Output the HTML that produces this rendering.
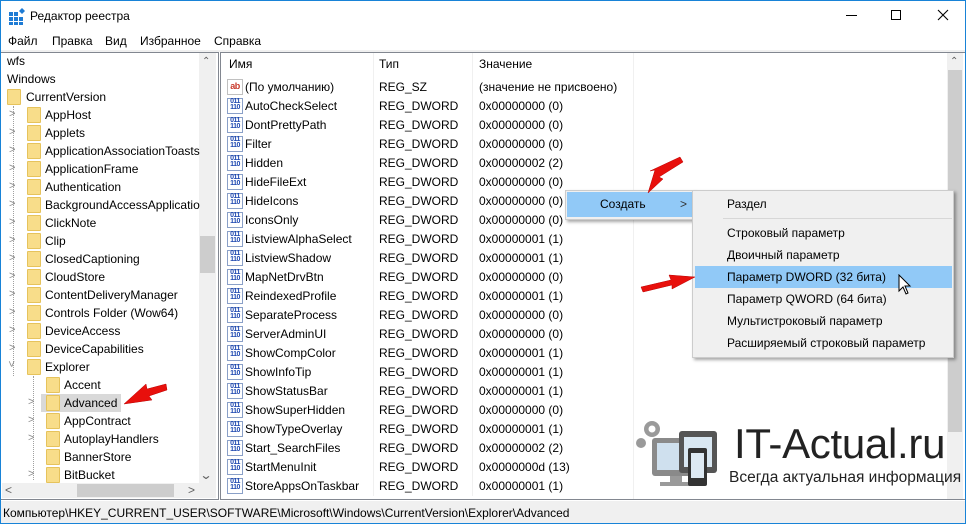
<!DOCTYPE html>
<html><head><meta charset="utf-8"><style>
*{margin:0;padding:0;box-sizing:border-box}
body{width:966px;height:524px;overflow:hidden;background:#fff;font-family:"Liberation Sans","DejaVu Sans",sans-serif;font-size:12px;color:#000;position:relative}
.a{position:absolute;white-space:nowrap}
.fold{position:absolute;width:14px;height:16px;background:#f8dd8a;border:1px solid #e6c35c;border-radius:1px}
.chev{position:absolute;color:#8a8a8a;font-size:11px}
.ic{position:absolute;width:16px;height:16px;border:1px solid #8aa0c8;background:#fff;font-size:7px;line-height:6px;color:#1d47b0;font-weight:bold;text-align:center;letter-spacing:-0.5px}
.rows{position:absolute;left:227px;line-height:19px;width:400px;white-space:nowrap}
.rows>div{position:relative;height:19px}
</style></head><body>
<div class="a" style="left:0;top:0;width:966px;height:524px;border:1px solid #1883d7"></div>
<svg class="a" style="left:9px;top:8px" width="17" height="17"><g fill="#1e7bd4"><rect x="0" y="4" width="4" height="4"/><rect x="5" y="4" width="4" height="4"/><rect x="0" y="9" width="4" height="4"/><rect x="5" y="9" width="4" height="4"/><rect x="10" y="9" width="4" height="4"/><rect x="0" y="14" width="4" height="3"/><rect x="5" y="14" width="4" height="3"/><rect x="10" y="14" width="4" height="3"/></g><path d="M13 0l3 3-3 3-3-3z" fill="#1e7bd4"/></svg>
<div class="a" style="left:30px;top:9px;font-size:12px">Редактор реестра</div>
<div class="a" style="left:846px;top:15px;width:11px;height:1px;background:#000"></div>
<div class="a" style="left:891px;top:10px;width:10px;height:10px;border:1px solid #000"></div>
<svg class="a" style="left:937px;top:9px" width="12" height="12"><path d="M1 1L11 11M11 1L1 11" stroke="#000" stroke-width="1.1"/></svg>
<div class="a" style="left:8px;top:34px">Файл</div>
<div class="a" style="left:52px;top:34px">Правка</div>
<div class="a" style="left:105px;top:34px">Вид</div>
<div class="a" style="left:140px;top:34px">Избранное</div>
<div class="a" style="left:214px;top:34px">Справка</div>
<div class="a" style="left:1px;top:50px;width:964px;height:2px;background:#f0f0f0"></div>
<!-- left pane -->
<div class="a" style="left:1px;top:52px;width:218px;height:448px;border:1px solid #828790;border-left:none"></div>
<div class="a" style="left:199px;top:53px;width:17px;height:430px;background:#f0f0f0"></div>
<div class="a" style="left:200px;top:236px;width:15px;height:37px;background:#cdcdcd"></div>
<div class="a" style="left:202px;top:56px;color:#606060;font-size:10px">&#8963;</div>
<div class="a" style="left:201px;top:468px;color:#606060;font-size:12px;transform:scaleX(1.3)">&#8964;</div>
<div class="a" style="left:2px;top:483px;width:214px;height:15px;background:#f0f0f0"></div>
<div class="a" style="left:77px;top:484px;width:97px;height:13px;background:#cdcdcd"></div>
<div class="a" style="left:5px;top:483px;color:#606060">&lt;</div>
<div class="a" style="left:188px;top:483px;color:#606060">&gt;</div>
<div class="a" style="left:7px;top:54px;font-size:12px">wfs</div>
<div class="a" style="left:7px;top:72px">Windows</div>
<div class="fold" style="left:7px;top:89px"></div><div class="a" style="left:26px;top:90px">CurrentVersion</div>
<div class="a" style="left:13px;top:106px;width:1px;height:270px;border-left:1px dotted #a0a0a0"></div>
<div class="chev" style="left:9px;top:108px">&gt;</div><div class="fold" style="left:27px;top:107px"></div><div class="a" style="left:45px;top:108px">AppHost</div>
<div class="chev" style="left:9px;top:126px">&gt;</div><div class="fold" style="left:27px;top:125px"></div><div class="a" style="left:45px;top:126px">Applets</div>
<div class="chev" style="left:9px;top:144px">&gt;</div><div class="fold" style="left:27px;top:143px"></div><div class="a" style="left:45px;top:144px">ApplicationAssociationToasts</div>
<div class="chev" style="left:9px;top:162px">&gt;</div><div class="fold" style="left:27px;top:161px"></div><div class="a" style="left:45px;top:162px">ApplicationFrame</div>
<div class="chev" style="left:9px;top:180px">&gt;</div><div class="fold" style="left:27px;top:179px"></div><div class="a" style="left:45px;top:180px">Authentication</div>
<div class="chev" style="left:9px;top:198px">&gt;</div><div class="fold" style="left:27px;top:197px"></div><div class="a" style="left:45px;top:198px">BackgroundAccessApplicatio</div>
<div class="chev" style="left:9px;top:216px">&gt;</div><div class="fold" style="left:27px;top:215px"></div><div class="a" style="left:45px;top:216px">ClickNote</div>
<div class="chev" style="left:9px;top:234px">&gt;</div><div class="fold" style="left:27px;top:233px"></div><div class="a" style="left:45px;top:234px">Clip</div>
<div class="chev" style="left:9px;top:252px">&gt;</div><div class="fold" style="left:27px;top:251px"></div><div class="a" style="left:45px;top:252px">ClosedCaptioning</div>
<div class="chev" style="left:9px;top:270px">&gt;</div><div class="fold" style="left:27px;top:269px"></div><div class="a" style="left:45px;top:270px">CloudStore</div>
<div class="chev" style="left:9px;top:288px">&gt;</div><div class="fold" style="left:27px;top:287px"></div><div class="a" style="left:45px;top:288px">ContentDeliveryManager</div>
<div class="chev" style="left:9px;top:306px">&gt;</div><div class="fold" style="left:27px;top:305px"></div><div class="a" style="left:45px;top:306px">Controls Folder (Wow64)</div>
<div class="chev" style="left:9px;top:324px">&gt;</div><div class="fold" style="left:27px;top:323px"></div><div class="a" style="left:45px;top:324px">DeviceAccess</div>
<div class="chev" style="left:9px;top:342px">&gt;</div><div class="fold" style="left:27px;top:341px"></div><div class="a" style="left:45px;top:342px">DeviceCapabilities</div>
<div class="chev" style="left:8px;top:358px;transform:rotate(90deg)">&gt;</div><div class="fold" style="left:27px;top:359px"></div><div class="a" style="left:45px;top:360px">Explorer</div>
<div class="a" style="left:33px;top:376px;width:1px;height:104px;border-left:1px dotted #a0a0a0"></div>
<div class="fold" style="left:46px;top:377px"></div><div class="a" style="left:64px;top:378px">Accent</div>
<div class="a" style="left:41px;top:394px;width:80px;height:18px;background:#d9d9d9"></div>
<div class="chev" style="left:28px;top:396px">&gt;</div><div class="fold" style="left:46px;top:395px"></div><div class="a" style="left:64px;top:396px">Advanced</div>
<div class="chev" style="left:28px;top:414px">&gt;</div><div class="fold" style="left:46px;top:413px"></div><div class="a" style="left:64px;top:414px">AppContract</div>
<div class="chev" style="left:28px;top:432px">&gt;</div><div class="fold" style="left:46px;top:431px"></div><div class="a" style="left:64px;top:432px">AutoplayHandlers</div>
<div class="fold" style="left:46px;top:449px"></div><div class="a" style="left:64px;top:450px">BannerStore</div>
<div class="chev" style="left:28px;top:468px">&gt;</div><div class="fold" style="left:46px;top:467px"></div><div class="a" style="left:64px;top:468px;height:14px;overflow:hidden">BitBucket</div>
<!-- right pane -->
<div class="a" style="left:220px;top:52px;width:745px;height:448px;border:1px solid #828790;border-right:none"></div>
<div class="a" style="left:947px;top:53px;width:16px;height:446px;background:#f0f0f0"></div>
<div class="a" style="left:948px;top:70px;width:14px;height:362px;background:#cdcdcd"></div>
<div class="a" style="left:950px;top:56px;color:#606060;font-size:10px">&#8963;</div>
<div class="a" style="left:373px;top:53px;width:1px;height:446px;background:#f0f0f0"></div>
<div class="a" style="left:472px;top:53px;width:1px;height:446px;background:#f0f0f0"></div>
<div class="a" style="left:633px;top:53px;width:1px;height:446px;background:#f0f0f0"></div>
<div class="a" style="left:229px;top:57px">Имя</div><div class="a" style="left:379px;top:57px">Тип</div><div class="a" style="left:479px;top:57px">Значение</div>
<div class="rows" style="top:78px">
<div><div class="ic" style="top:1px;border-color:#c0c0c0;color:#c8382a;font-size:9px;line-height:13px">ab</div><span style="position:absolute;left:18px">(По умолчанию)</span><span style="position:absolute;left:152px">REG_SZ</span><span style="position:absolute;left:252px">(значение не присвоено)</span></div>
</div>
<div class="rows" style="top:97px">
<div><div class="ic" style="top:1px">011<br>110</div><span style="position:absolute;left:18px">AutoCheckSelect</span><span style="position:absolute;left:152px">REG_DWORD</span><span style="position:absolute;left:252px">0x00000000 (0)</span></div>
<div><div class="ic" style="top:1px">011<br>110</div><span style="position:absolute;left:18px">DontPrettyPath</span><span style="position:absolute;left:152px">REG_DWORD</span><span style="position:absolute;left:252px">0x00000000 (0)</span></div>
<div><div class="ic" style="top:1px">011<br>110</div><span style="position:absolute;left:18px">Filter</span><span style="position:absolute;left:152px">REG_DWORD</span><span style="position:absolute;left:252px">0x00000000 (0)</span></div>
<div><div class="ic" style="top:1px">011<br>110</div><span style="position:absolute;left:18px">Hidden</span><span style="position:absolute;left:152px">REG_DWORD</span><span style="position:absolute;left:252px">0x00000002 (2)</span></div>
<div><div class="ic" style="top:1px">011<br>110</div><span style="position:absolute;left:18px">HideFileExt</span><span style="position:absolute;left:152px">REG_DWORD</span><span style="position:absolute;left:252px">0x00000000 (0)</span></div>
<div><div class="ic" style="top:1px">011<br>110</div><span style="position:absolute;left:18px">HideIcons</span><span style="position:absolute;left:152px">REG_DWORD</span><span style="position:absolute;left:252px">0x00000000 (0)</span></div>
<div><div class="ic" style="top:1px">011<br>110</div><span style="position:absolute;left:18px">IconsOnly</span><span style="position:absolute;left:152px">REG_DWORD</span><span style="position:absolute;left:252px">0x00000000 (0)</span></div>
<div><div class="ic" style="top:1px">011<br>110</div><span style="position:absolute;left:18px">ListviewAlphaSelect</span><span style="position:absolute;left:152px">REG_DWORD</span><span style="position:absolute;left:252px">0x00000001 (1)</span></div>
<div><div class="ic" style="top:1px">011<br>110</div><span style="position:absolute;left:18px">ListviewShadow</span><span style="position:absolute;left:152px">REG_DWORD</span><span style="position:absolute;left:252px">0x00000001 (1)</span></div>
<div><div class="ic" style="top:1px">011<br>110</div><span style="position:absolute;left:18px">MapNetDrvBtn</span><span style="position:absolute;left:152px">REG_DWORD</span><span style="position:absolute;left:252px">0x00000000 (0)</span></div>
<div><div class="ic" style="top:1px">011<br>110</div><span style="position:absolute;left:18px">ReindexedProfile</span><span style="position:absolute;left:152px">REG_DWORD</span><span style="position:absolute;left:252px">0x00000001 (1)</span></div>
<div><div class="ic" style="top:1px">011<br>110</div><span style="position:absolute;left:18px">SeparateProcess</span><span style="position:absolute;left:152px">REG_DWORD</span><span style="position:absolute;left:252px">0x00000000 (0)</span></div>
<div><div class="ic" style="top:1px">011<br>110</div><span style="position:absolute;left:18px">ServerAdminUI</span><span style="position:absolute;left:152px">REG_DWORD</span><span style="position:absolute;left:252px">0x00000000 (0)</span></div>
<div><div class="ic" style="top:1px">011<br>110</div><span style="position:absolute;left:18px">ShowCompColor</span><span style="position:absolute;left:152px">REG_DWORD</span><span style="position:absolute;left:252px">0x00000001 (1)</span></div>
<div><div class="ic" style="top:1px">011<br>110</div><span style="position:absolute;left:18px">ShowInfoTip</span><span style="position:absolute;left:152px">REG_DWORD</span><span style="position:absolute;left:252px">0x00000001 (1)</span></div>
<div><div class="ic" style="top:1px">011<br>110</div><span style="position:absolute;left:18px">ShowStatusBar</span><span style="position:absolute;left:152px">REG_DWORD</span><span style="position:absolute;left:252px">0x00000001 (1)</span></div>
<div><div class="ic" style="top:1px">011<br>110</div><span style="position:absolute;left:18px">ShowSuperHidden</span><span style="position:absolute;left:152px">REG_DWORD</span><span style="position:absolute;left:252px">0x00000000 (0)</span></div>
<div><div class="ic" style="top:1px">011<br>110</div><span style="position:absolute;left:18px">ShowTypeOverlay</span><span style="position:absolute;left:152px">REG_DWORD</span><span style="position:absolute;left:252px">0x00000001 (1)</span></div>
<div><div class="ic" style="top:1px">011<br>110</div><span style="position:absolute;left:18px">Start_SearchFiles</span><span style="position:absolute;left:152px">REG_DWORD</span><span style="position:absolute;left:252px">0x00000002 (2)</span></div>
<div><div class="ic" style="top:1px">011<br>110</div><span style="position:absolute;left:18px">StartMenuInit</span><span style="position:absolute;left:152px">REG_DWORD</span><span style="position:absolute;left:252px">0x0000000d (13)</span></div>
<div><div class="ic" style="top:1px">011<br>110</div><span style="position:absolute;left:18px">StoreAppsOnTaskbar</span><span style="position:absolute;left:152px">REG_DWORD</span><span style="position:absolute;left:252px">0x00000001 (1)</span></div>
</div>
<div class="a" style="left:221px;top:496px;width:400px;height:3px;background:#fff"></div>
<!-- context menu -->
<div class="a" style="left:565px;top:190px;width:130px;height:30px;background:#f0f0f0;border:1px solid #ccc;box-shadow:2px 2px 3px rgba(0,0,0,.35)"></div>
<div class="a" style="left:567px;top:192px;width:126px;height:25px;background:#91c9f7"></div>
<div class="a" style="left:600px;top:197px">Создать</div>
<div class="a" style="left:680px;top:197px;color:#333">&gt;</div>
<div class="a" style="left:692px;top:190px;width:262px;height:168px;background:#f0f0f0;border:1px solid #ccc;box-shadow:2px 2px 3px rgba(0,0,0,.35)"></div>
<div class="a" style="left:723px;top:218px;width:229px;height:1px;background:#d7d7d7"></div>
<div class="a" style="left:695px;top:266px;width:257px;height:22px;background:#91c9f7"></div>
<div class="a" style="left:727px;top:197px">Раздел</div>
<div class="a" style="left:727px;top:226px">Строковый параметр</div>
<div class="a" style="left:727px;top:248px">Двоичный параметр</div>
<div class="a" style="left:727px;top:270px">Параметр DWORD (32 бита)</div>
<div class="a" style="left:727px;top:292px">Параметр QWORD (64 бита)</div>
<div class="a" style="left:727px;top:314px">Мультистроковый параметр</div>
<div class="a" style="left:727px;top:336px">Расширяемый строковый параметр</div>
<svg class="a" style="left:898px;top:274px" width="14" height="22"><path d="M1 1v16l4-4 3 7 2-1-3-7h5z" fill="#fff" stroke="#000"/></svg>
<svg class="a" style="left:0;top:0" width="966" height="524"><g fill="#e8100c" stroke="#b00" stroke-width=".5">
<path d="M648 193L655 170L650 171L680 157L683 162L659 177L663 179Z"/>
<path d="M695 277L672 289L672 285L643 292L641 287L671 280L669 275Z"/>
<path d="M124 404L146 384L147 389L166 384L167 390L149 396L152 400Z"/>
</g></svg>
<!-- logo -->
<svg class="a" style="left:632px;top:420px" width="96" height="72"><g fill="#9a9a9a">
<circle cx="20" cy="9" r="8"/><circle cx="9" cy="23" r="5"/><circle cx="33" cy="22" r="4"/>
<rect x="20" y="18" width="46" height="38" rx="3" fill="#8a8a8a"/><rect x="25" y="23" width="36" height="27" fill="#cfe0ee"/>
<rect x="38" y="56" width="12" height="7"/><rect x="28" y="62" width="32" height="4"/>
<rect x="47" y="11" width="38" height="42" rx="3" fill="#555"/><rect x="52" y="17" width="28" height="30" fill="#d9e7f2"/>
<rect x="56" y="28" width="19" height="38" rx="2" fill="#333"/><rect x="59" y="33" width="13" height="25" fill="#dde9f3"/>
</g><circle cx="20" cy="9" r="3.5" fill="#fff"/></svg>
<div class="a" style="left:734px;top:421px;font-size:42px;color:#222;letter-spacing:-0.3px;line-height:46px">IT-Actual.ru</div>
<div class="a" style="left:729px;top:469px;font-size:15.5px;color:#222">Всегда актуальная информация</div>
<div class="a" style="left:1px;top:501px;width:964px;height:22px;background:#f0f0f0"></div>
<div class="a" style="left:3px;top:506px">Компьютер\HKEY_CURRENT_USER\SOFTWARE\Microsoft\Windows\CurrentVersion\Explorer\Advanced</div>
</body></html>
